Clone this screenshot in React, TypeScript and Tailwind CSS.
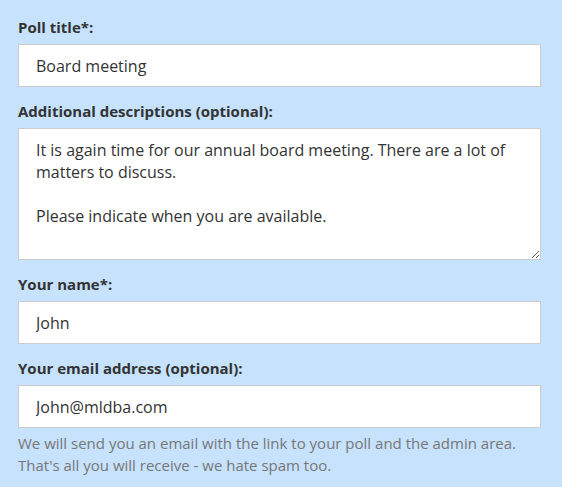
import type { ReactNode } from 'react';

const description =
  'It is again time for our annual board meeting. There are a lot of matters to discuss.\n\nPlease indicate when you are available.';

function Field({ label, children }: { label: string; children: ReactNode }) {
  return (
    <div className="flex flex-col">
      <label className="mb-[6px] text-[15px] font-bold leading-[22px] text-[#333]">{label}</label>
      {children}
    </div>
  );
}

function TextInput({ value }: { value: string }) {
  return (
    <input
      type="text"
      readOnly
      defaultValue={value}
      className="h-[43px] w-full border border-[#ccc] bg-white px-[17px] text-[16px] text-[#333] outline-none"
    />
  );
}

export default function App() {
  return (
    <div
      className="min-h-[487px] w-full bg-[#c6e2fd] px-[18px] pt-[16px]"
      style={{ fontFamily: '"Open Sans", "Noto Sans", sans-serif' }}
    >
      <div className="flex w-[523px] flex-col gap-[13px]">
        <Field label="Poll title*:">
          <TextInput value="Board meeting" />
        </Field>
        <Field label="Additional descriptions (optional):">
          <textarea
            readOnly
            defaultValue={description}
            className="block h-[132px] w-full resize-y border border-[#ccc] bg-white px-[17px] py-[10px] text-[16px] leading-[22px] text-[#333] outline-none"
          />
        </Field>
        <Field label="Your name*:">
          <TextInput value="John" />
        </Field>
        <Field label="Your email address (optional):">
          <TextInput value="John@mldba.com" />
          <p className="mt-[4px] text-[15px] leading-[22px] text-[#777]">
            We will send you an email with the link to your poll and the admin area.
            <br />
            That's all you will receive - we hate spam too.
          </p>
        </Field>
      </div>
    </div>
  );
}
